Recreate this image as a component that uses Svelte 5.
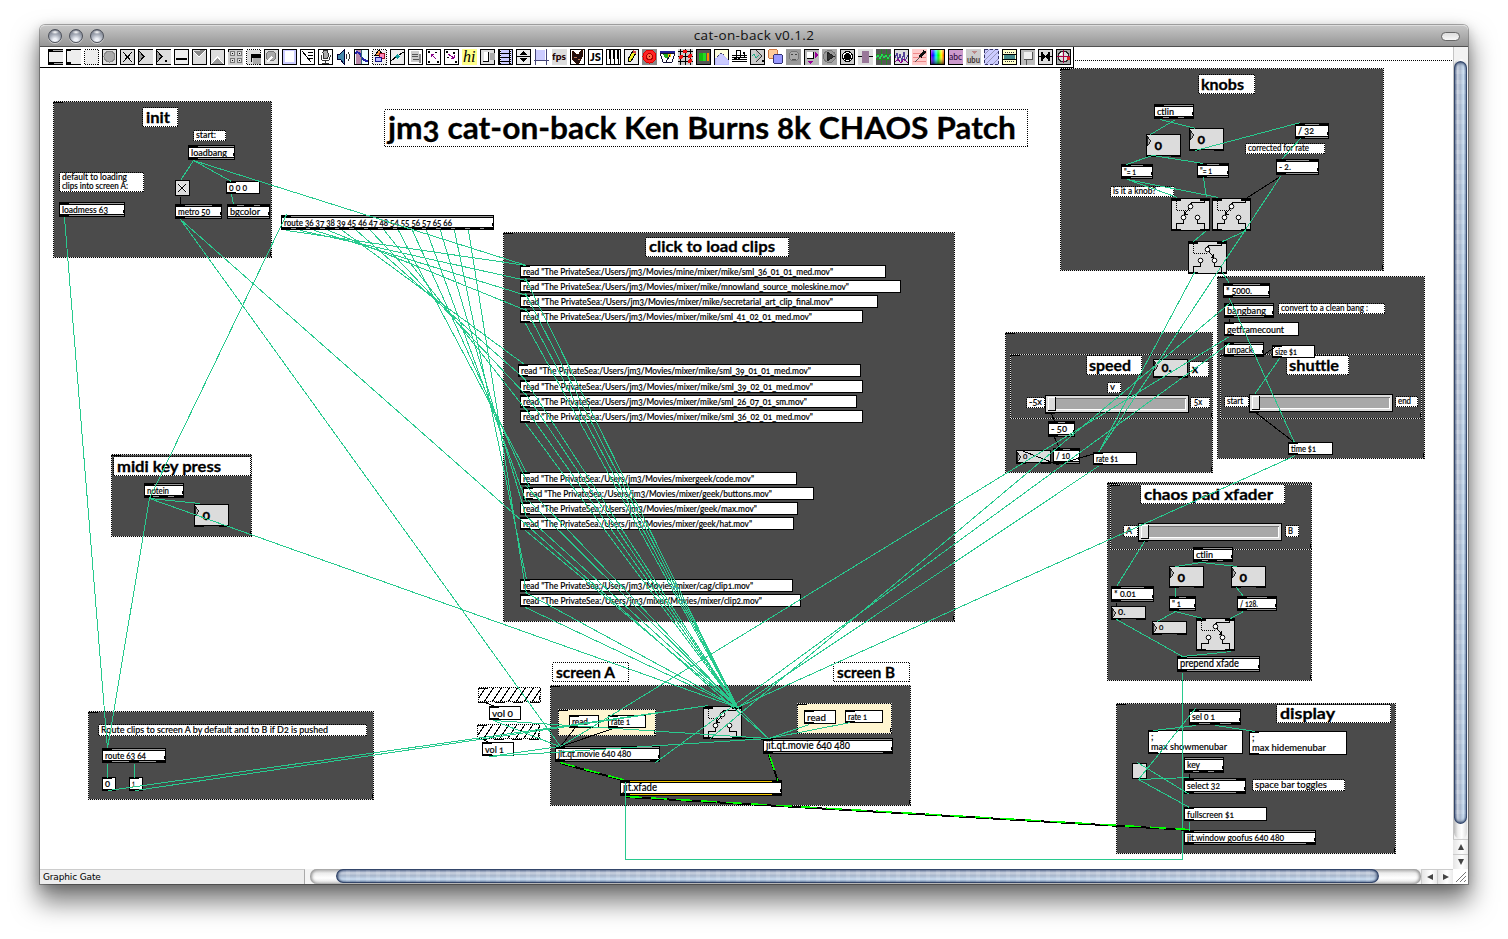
<script>
  const panels = [
    [53, 101, 219, 157], [503, 232, 452, 390], [1060, 68, 324, 203], [1005, 332, 208, 141],
    [1217, 276, 208, 183], [1107, 482, 205, 199], [1116, 703, 280, 151], [550, 685, 361, 121],
    [111, 454, 141, 83], [88, 711, 286, 89],
    [558, 709, 98, 27, '#fff5d0'], [797, 703, 95, 31, '#fff5d0'],
    [1010, 354, 203, 65, 'none'], [1220, 354, 202, 65, 'none'], [1110, 484, 202, 66, 'none'],
  ];

  // x, y, w, h, text, text width, font size, baseline offset, bold, text inset
  const comments = [
    [142, 107, 36, 20, 'init', 24, 16, 15.5, 1, 4],
    [384, 109, 644, 38, 'jm3 cat-on-back Ken Burns 8k CHAOS Patch', 628, 30, 30, 1, 4],
    [193, 130, 33, 11, 'start:', 20, 8.5, 8, 0, 3],
    [645, 237, 144, 20, 'click to load clips', 126, 16, 15, 1, 4],
    [1198, 74, 57, 20, 'knobs', 43, 16, 15.5, 1, 3],
    [1245, 143, 80, 11, 'corrected for rate', 61, 8.5, 8, 0, 3],
    [1110, 186, 64, 11, 'is it a knob?', 43, 8.5, 8, 0, 3],
    [1278, 303, 107, 11, 'convert to a clean bang :', 87, 8.5, 8, 0, 3],
    [1286, 355, 63, 20, 'shuttle', 50, 16, 15.5, 1, 3],
    [1086, 355, 56, 20, 'speed', 42, 16, 15.5, 1, 3],
    [1107, 382, 14, 11, 'v', 5, 8.5, 8, 0, 3],
    [1189, 361, 20, 16, 'x', 6, 12, 12, 1, 3],
    [1026, 397, 19, 11, '-5x', 13, 8.5, 8, 0, 3],
    [1190, 397, 20, 11, '5x', 8, 8.5, 8, 0, 4],
    [1224, 396, 25, 11, 'start', 16, 8.5, 8, 0, 3],
    [1395, 396, 23, 11, 'end', 13, 8.5, 8, 0, 3],
    [1140, 484, 145, 20, 'chaos pad xfader', 129, 16, 15.5, 1, 4],
    [1123, 525, 15, 12, 'A', 6, 9, 9, 0, 3],
    [1285, 525, 14, 12, 'B', 5, 9, 9, 0, 3],
    [1276, 704, 115, 19, 'display', 55, 16, 14.5, 1, 4],
    [1252, 779, 93, 12, 'space bar toggles', 72, 10, 9, 0, 3],
    [552, 662, 77, 20, 'screen A', 59, 16, 15.5, 1, 4],
    [833, 662, 77, 20, 'screen B', 58, 16, 15.5, 1, 4],
    [113, 456, 138, 20, 'midi key press', 104, 16, 15.5, 1, 4],
    [98, 724, 269, 12, 'Route clips to screen A by default and to B if D2 is pushed', 227, 10, 9, 0, 3],
  ];

  // x, y, w, h, text, text width, inlets, outlets, font size
  const objects = [
    [188, 145, 47, 15, 'loadbang', 36, 1, 1], [59, 202, 66, 15, 'loadmess 63', 46, 1, 1],
    [175, 204, 47, 15, 'metro 50', 32, 2, 1], [227, 204, 43, 15, 'bgcolor', 30, 3, 0],
    [281, 215, 213, 15, 'route 36 37 38 39 45 46 47 48 54 55 56 57 65 66', 168, 1, 15],
    [1154, 104, 40, 15, 'ctlin', 17, 1, 3], [1295, 123, 34, 16, '/ 32', 16, 2, 1],
    [1276, 159, 43, 16, '- 2.', 12, 2, 1, 10], [1121, 164, 32, 15, '"= 1', 12, 2, 1],
    [1197, 163, 32, 15, '"= 1', 12, 2, 1], [1223, 283, 47, 15, '* 5000.', 26, 2, 1],
    [1224, 303, 50, 15, 'bangbang', 39, 1, 2, 10], [1224, 342, 40, 15, 'unpack', 26, 1, 2],
    [1048, 421, 27, 16, '- 50', 16, 2, 1, 10], [1053, 448, 27, 16, '/ 10', 14, 2, 1, 10],
    [1193, 547, 40, 15, 'ctlin', 17, 1, 3], [1111, 586, 43, 16, '* 0.01', 22, 2, 1, 10],
    [1169, 596, 27, 15, '" 1', 9, 2, 1], [1237, 596, 40, 15, '/ 128.', 18, 2, 1],
    [1177, 656, 83, 16, 'prepend xfade', 59, 1, 1, 10.5], [1189, 709, 52, 16, 'sel 0 1', 23, 1, 3, 10],
    [1184, 757, 40, 16, 'key', 13, 0, 3, 10], [1184, 778, 62, 16, 'select 32', 33, 2, 2, 10],
    [1184, 830, 132, 15, 'jit.window goofus 640 480', 97, 1, 2, 9.5],
    [555, 746, 105, 16, 'jit.qt.movie 640 480', 73, 1, 2, 9.5],
    [763, 738, 130, 16, 'jit.qt.movie 640 480', 84, 1, 2, 10.5],
    [620, 780, 162, 16, 'jit.xfade', 34, 2, 2, 10.5, '#f5c800'],
    [144, 483, 40, 15, 'notein', 22, 1, 3], [102, 748, 64, 15, 'route 63 64', 41, 1, 3],
  ];

  // x, y, w, h, text, text width, font size
  const drive = 'read "The PrivateSea:/Users/jm3/';
  const messages = [
    [520, 265, 366, 13, drive + 'Movies/mine/mixer/mike/sml_36_01_01_med.mov"', 310],
    [520, 280, 381, 13, drive + 'Movies/mixer/mike/mnowland_source_moleskine.mov"', 326],
    [520, 295, 358, 13, drive + 'Movies/mixer/mike/secretarial_art_clip_final.mov"', 310],
    [520, 310, 343, 13, drive + 'Movies/mixer/mike/sml_41_02_01_med.mov"', 289],
    [518, 364, 343, 13, drive + 'Movies/mixer/mike/sml_39_01_01_med.mov"', 290],
    [520, 380, 343, 13, drive + 'Movies/mixer/mike/sml_39_02_01_med.mov"', 290],
    [520, 395, 337, 13, drive + 'Movies/mixer/mike/sml_26_07_01_sm.mov"', 284],
    [520, 410, 343, 13, drive + 'Movies/mixer/mike/sml_36_02_01_med.mov"', 290],
    [520, 472, 277, 13, drive + 'Movies/mixergeek/code.mov"', 231],
    [523, 487, 291, 13, drive + 'Movies/mixer/geek/buttons.mov"', 246],
    [520, 502, 278, 13, drive + 'Movies/mixer/geek/max.mov"', 234],
    [520, 517, 274, 13, drive + 'Movies/mixer/geek/hat.mov"', 229],
    [520, 579, 273, 13, drive + 'Movies/mixer/cag/clip1.mov"', 230],
    [520, 594, 281, 13, drive + 'mixer/Movies/mixer/clip2.mov"', 239],
    [226, 181, 34, 13, '0 0 0', 18], [1224, 322, 75, 14, 'getframecount', 57, 10],
    [1272, 345, 43, 13, 'size $1', 22], [1288, 442, 45, 13, 'time $1', 25],
    [1093, 452, 44, 13, 'rate $1', 22], [1148, 730, 95, 24, ';|max showmenubar', 76, 10],
    [1249, 731, 98, 24, ';|max hidemenubar', 74, 10], [1184, 807, 83, 14, 'fullscreen $1', 47, 10],
    [569, 715, 30, 13, 'read', 16], [608, 715, 38, 13, 'rate 1', 19],
    [804, 710, 32, 14, 'read', 19, 10], [845, 710, 38, 13, 'rate 1', 19],
    [489, 706, 32, 14, 'vol 0', 21, 10], [482, 742, 32, 14, 'vol 1', 19, 10],
    [102, 777, 14, 14, '0', 5], [129, 777, 14, 14, '1', 3],
  ];

  // x, y, w, h, text, font size, bold
  const numbers = [
    [1146, 134, 35, 22, '0', 14, 1], [1189, 128, 35, 22, '0', 14, 1], [1153, 359, 35, 18, '0.', 13, 1],
    [1016, 450, 35, 13, '0', 8, 0], [1169, 566, 35, 21, '0', 14, 1], [1231, 566, 35, 21, '0', 14, 1],
    [1111, 606, 35, 13, '0.', 9.5, 0], [1152, 621, 35, 13, '0', 8, 0], [194, 504, 35, 22, '0', 14, 1],
  ];
  const gates = [[1171, 198, 0], [1212, 198, 0], [1188, 241, 1], [1196, 618, 1], [703, 706, 0]];
  const sliders = [[1045, 395], [1249, 394], [1138, 523]];
  const toggles = [[175, 180, 1], [1132, 763, 0]];
  const hatches = [[478, 687], [477, 724]];

  const clipTops = messages.slice(0, 14);
  const cords = [
    [193, 160, 180, 180], [193, 160, 231, 181], [193, 160, 526, 265], [231, 194, 233, 204],
    [180, 219, 560, 746], [180, 219, 768, 738], [64, 217, 107, 748], [149, 498, 286, 214],
    [149, 498, 107, 748], [149, 498, 200, 503], [149, 498, 737, 707], [107, 763, 107, 777],
    [134, 763, 134, 777], [108, 790, 708, 705], [135, 790, 708, 705], [493, 720, 559, 746],
    [493, 720, 768, 738], [489, 756, 559, 746], [489, 756, 768, 738], [809, 724, 768, 738],
    [850, 722, 768, 738], [737, 707, 768, 738], [1229, 336, 560, 746], [1230, 302, 710, 738], [1230, 342, 655, 762],
    [1099, 465, 737, 707], [1295, 455, 737, 707], [1194, 272, 1098, 452], [1222, 272, 1229, 283],
    [1280, 176, 1098, 452], [1229, 298, 1294, 442], [1279, 358, 1254, 394], [1144, 541, 1116, 586],
    [1116, 619, 1182, 656], [1201, 562, 1175, 566], [1201, 562, 1237, 566], [1175, 587, 1175, 596],
    [1236, 587, 1243, 596], [1175, 611, 1157, 621], [1175, 611, 1202, 618], [1243, 611, 1230, 618],
    [1231, 651, 1182, 656], [1182, 672, 1182, 859], [1182, 859, 625, 859], [625, 859, 625, 781],
    [1160, 119, 1195, 128], [1175, 119, 1150, 134], [1195, 150, 1300, 122], [1300, 138, 1281, 159],
    [1152, 155, 1126, 164], [1152, 155, 1203, 163], [1127, 179, 1177, 197], [1127, 179, 1218, 197],
    [1203, 177, 1206, 197], [1206, 230, 1193, 241], [1246, 230, 1222, 241], [1195, 708, 1138, 779],
    [1196, 725, 1153, 730], [1215, 725, 1255, 731], [1137, 762, 1189, 794], [1138, 779, 1189, 777],
    [1138, 779, 1189, 807], [1189, 821, 1189, 830],
    ...clipTops.map((m, i) => [286 + 14 * i, 230, m[0] + 6, m[1]]),
    ...clipTops.map((m) => [m[0] + 5, m[1] + 13, 737, 707]),
  ];
  const darkCords = [
    [180, 196, 180, 204], [574, 728, 560, 746], [613, 728, 560, 746], [1229, 318, 1229, 322],
    [1262, 355, 1277, 345], [1255, 412, 1294, 442], [1051, 413, 1054, 421], [1054, 437, 1059, 448],
    [1057, 464, 1098, 452], [1057, 464, 1021, 450], [1116, 602, 1116, 606], [1280, 176, 1247, 197],
    [1189, 773, 1189, 778], [736, 738, 768, 739], [484, 702, 495, 706], [483, 739, 488, 742],
  ];
  const matrixCords = [[560, 762, 626, 780], [769, 754, 778, 780], [626, 796, 1189, 829]];

  const ports = (x, w, n) => Array.from({ length: n }, (_, i) => (n < 2 ? x : Math.round(x + (i * (w - 10)) / (n - 1))));
  const portW = (w, n) => Math.max(2, Math.min(10, Math.floor(w / Math.max(n, 1)) - 4));

  // Toolbar glyphs, each on a 16 x 16 grid
  const P = (d, c = '#000', f = 'none', w = 1) => `<path d="${d}" stroke="${c}" fill="${f}" stroke-width="${w}"/>`;
  const R = (x, y, w, h, f = '#000') => `<rect x="${x}" y="${y}" width="${w}" height="${h}" fill="${f}"/>`;
  const C = (x, y, r, f = '#000', s = 'none') => `<circle cx="${x}" cy="${y}" r="${r}" fill="${f}" stroke="${s}"/>`;
  const B = (f = '#eee', s = '#000') => `<rect x=".5" y=".5" width="14" height="15" fill="${f}" stroke="${s}"/>`;
  const T = (t, x, y, s, f = '#000', e = '') => `<text x="${x}" y="${y}" font-size="${s}" fill="${f}" ${e}>${t}</text>`;
  const dash = (f = '#fff') => `<rect x=".5" y=".5" width="14" height="15" fill="${f}" stroke="#000" stroke-dasharray="1 1"/>`;
  const icons = [
    R(0, 0, 15, 16, '#eee') + R(0, 0, 1, 16) + R(0, 0, 15, 3) + R(5, 1, 10, 1, '#aaa') + R(0, 13, 15, 3) + R(6, 14, 9, 1, '#aaa'),
    R(0, 0, 15, 16, '#eee') + R(0, 0, 1, 16) + R(0, 0, 15, 1) + R(0, 0, 5, 2) + R(0, 15, 15, 1) + R(0, 13, 5, 3),
    dash('#eee'),
    B('#ddd') + C(7.5, 7.5, 5.5, '#aaa', '#888'),
    B('#ddd') + P('M4 4L13 13', '#fff') + P('M3 3L12 13M12 3L3 13'),
    R(0, 0, 15, 16, '#ddd') + P('M.5 0V16M0 .5H15M0 15.5H15') + P('M1 2L6 7.5L1 13', '#000', '#999'),
    R(0, 0, 15, 16, '#ddd') + P('M.5 0V16M0 .5H15M0 15.5H15') + P('M1 2L6 7.5L1 13', '#000', '#999') + R(9, 11, 2, 2),
    B('#eee') + R(2, 9, 11, 2),
    B('#ddd') + P('M1 2L7 8L14 1', '#fff', '#888'),
    B('#ddd') + P('M1 15L7.5 8L14 15', '#fff', '#999'),
    R(0, 0, 15, 16, '#ccc') + [2, 9].map((x) => [2, 9].map((y) => R(x, y, 5, 5, '#777') + R(x + 1, y + 1, 3, 3, '#ddd') + R(x + 2, y + 2, 1, 1)).join('')).join('') + P('M0 .5H15M.5 0V3'),
    dash('#ddd') + R(5, 5, 10, 4) + R(7, 9, 8, 6, '#aaa') + R(5, 5, 1, 8),
    B('#ddd') + C(7, 7, 5, '#aaa', '#777') + P('M8 8L3 13', '#fff', 'none', 2),
    B('#ccf', '#000') + R(3, 2, 9, 11, '#fff'),
    B('#fff') + P('M2 2L11 13M8 3H13M8 6H13M8 9H13'),
    B('#fff') + `<rect x="5" y="1" width="5" height="9" rx="2.5" fill="#aaa" stroke="#333"/>` + P('M3 6V8Q3 12 7.5 12Q12 12 12 8V6M7.5 12V15M4 14.500H11', '#333'),
    P('M1 5H4L8 1V15L4 10H1Z', '#003', '#48a') + P('M10 5Q12 8 10 10M12 3Q15 8 12 12', '#333'),
    B('#eff') + R(2, 1, 5, 14, '#b8a') + P('M1 4Q5 2 7 7T14 12', '#22a', 'none', 2) + P('M7 1V15', '#367'),
    dash('#eee') + P('M3 6L7 1L11 6Z', '#000', '#f94') + C(10, 7, 3, '#f8b', '#912') + `<rect x="3.5" y="8.5" width="6" height="4" fill="#bbf" stroke="#118"/>`,
    B('#eee') + P('M1 12L7 7L14 3') + C(7.5, 7.5, 2.2, '#199'),
    B('#fff') + R(3, 2, 8, 11, '#ccc') + P('M4 5.500H10M4 7.500H10M5 10.500H12', '#555') + R(11, 5, 2, 9, '#888'),
    B('#fff') + R(2, 2, 2, 2) + R(2, 12, 2, 2) + R(11, 12, 2, 2) + R(9, 3, 2, 1) + P('M5 5L10 10M5 5.500H8M5.500 5V8', '#808'),
    B('#fff') + R(2, 2, 2, 2) + R(9, 3, 2, 2) + R(3, 8, 2, 1) + R(11, 12, 2, 2) + P('M4 5L10 9M10 9.500H7M10.500 9V6', '#808'),
    R(0, 0, 15, 16, '#ff8') + T('hi', 1, 13, 16, '#000', 'font-family="Liberation Serif" font-style="italic"'),
    B('#ddd') + R(4, 3, 5, 9, '#fff') + P('M8.5 3V12.500H3', '#000') + R(10, 4, 5, 7, '#aaa'),
    B('#ccf') + R(1, 1, 2, 14) + R(11, 1, 2, 14) + P('M3 4.5H11M3 8.5H11M3 12.5H11') + P('M2 1V15M12 1V15', '#fff', 'none', '1" stroke-dasharray="1 1'),
    B('#eee') + P('M4 6L7.5 2L11 6ZM4 9L7.5 13L11 9Z', 'none', '#000') + P('M1 7.5H14'),
    R(0, 0, 15, 16, '#fff') + R(2, 1, 9, 10, '#ccf') + P('M1.500 0V16M0 11.5H15M12.500 0V16', '#447'),
    R(0, 0, 15, 16, '#ddd') + T('fps', 0, 11, 9.5, '#200', 'font-weight="900" textLength="14" lengthAdjust="spacingAndGlyphs"'),
    B('#fff') + P('M3 2L6 5H9L12 1L12 8L9 14H6L2 10Z', '#310', '#211') + P('M4 8.500H7M8 10.500H10', '#b75'),
    B('#fff') + T('JS', 2, 12, 11, '#000', 'font-weight="900" textLength="11" lengthAdjust="spacingAndGlyphs"'),
    B('#fff') + R(3, 1, 2, 9) + R(7, 1, 2, 9) + R(11, 1, 2, 9) + P('M4.500 9V15M8.500 9V15M12.500 9V15'),
    B('#eee') + P('M4 10L9 2L12 4L7 12L4 13Z', '#000', '#ee2') + P('M9 2L12 4', '#c44', 'none', 2),
    R(0, 0, 15, 16, '#888') + C(7.5, 7.5, 6.5, '#f22', '#d00') + C(7.5, 7.5, 3, '#f64', '#a00') + C(7.5, 7.5, 1, '#400'),
    P('M0 4H15L12 13H3Z', '#113', '#fff') + P('M3 5L5 9H8V5Z', 'none', '#2a2') + R(8, 5, 3, 3, '#fc0') + P('M6 13L10 6', '#113') + P('M0 3H15', '#229', 'none', 2),
    R(0, 0, 15, 16, '#ccc') + P('M2.5 0V16M7.5 0V16M12.5 0V16M0 2.5H15M0 7.5H15M0 12.5H15') + C(7, 2.5, 2, '#e11') + C(12, 7, 2, '#e11') + C(3, 8, 2, '#e11') + C(12, 12, 2, '#e11'),
    B('#555') + R(3, 4, 4, 8, '#1b1') + R(7, 4, 3, 8, '#2d2') + R(11, 4, 2, 8, '#f80'),
    B('#ffd') + P('M1 15V10L3 9L5 6L7 4L9 6L12 9L14 11V15Z', '#bbf', '#ccf') + P('M3 8L5 6L7 4L10 6', '#446', 'none', '1" stroke-dasharray="1 1'),
    P('M0 6.5H15M0 8.5H15M0 10.5H15M0 12.5H15') + P('M4.500 1V10M8.500 1V9M4 1.500H8M12.500 4V9') + C(3, 10, 1.5) + C(7, 9, 1.5) + C(12, 4, 1.5),
    B('#ccc') + P('M6 1L12 7L6 13', '#333', '#bbb') + P('M2 7L4 5L6 9L9 6', '#2a8') + R(12, 11, 2, 2),
    `<rect x=".5" y=".5" width="9" height="9" rx="2" fill="#fc9" stroke="#c74"/><rect x="5.500" y="5.500" width="9" height="9" rx="2" fill="#99f" stroke="#337"/>`,
    R(0, 0, 15, 16, '#999') + C(8, 7, 5, '#aaa', '#777') + R(5, 5, 2, 1, '#444') + R(9, 5, 2, 1, '#444') + R(6, 10, 4, 1, '#555'),
    R(0, 0, 15, 16, '#bbb') + P('M0 .5H15M.5 0V16') + R(3, 3, 6, 6, '#fff') + P('M9.500 3V9.5H3') + P('M11 3V9L14 6ZM4 12H9L6.500 15Z', 'none', '#909'),
    R(0, 0, 15, 16, '#aaa') + C(7.5, 7.5, 6, '#999', '#777') + P('M5 3L12 7.5L5 12Z', '#222', '#333'),
    B('#ccc') + C(7.5, 7.5, 5, '#fff', '#000') + C(7.5, 7.5, 3.5),
    R(0, 0, 15, 16, '#ddd') + P('M0 7.5H15') + R(4, 2, 7, 12, '#979'),
    R(0, 0, 15, 16, '#555') + P('M5.500 0V16M10.500 0V16M0 5.500H15M0 10.500H15', '#282') + P('M0 9L2 6L4 10L6 5L8 9L10 6L12 10L15 5', '#2d5'),
    B('#ddd') + P('M1 9L3 4L4 12L6 5L8 12L10 3L11 12L14 6', '#549') + P('M1 13L4 10L7 14L10 10L14 14', '#808'),
    R(0, 0, 15, 16, '#fcc') + P('M1 4.500H14M1 8.500H14M1 12.500H14', '#e88') + P('M3 13L8 8', '#555') + P('M8 8L13 2', '#111', 'none', 3),
    `<rect width="15" height="16" fill="url(#hue)"/><rect width="15" height="16" fill="url(#shade)"/>` + P('M.5 0V16M14.500 0V16M0 .5H15M0 15.5H15'),
    R(0, 0, 15, 16, '#c9c') + P('M0 .5H15M.5 0V16M0 15.5H15') + T('abc', 1, 11, 10, '#203', 'textLength="13" lengthAdjust="spacingAndGlyphs"'),
    R(0, 0, 15, 16, '#ccc') + P('M5 2H11L8 5Z', 'none', '#b88') + T('ubu', 1, 14, 9, '#433', 'font-weight="700" textLength="13" lengthAdjust="spacingAndGlyphs"'),
    R(0, 0, 15, 16, '#ccf') + P('M0 6L6 0M0 12L12 0M2 15L15 2M9 15L15 9', '#99b') + `<rect x=".5" y=".5" width="14" height="15" fill="none" stroke="#336" stroke-dasharray="3 2"/>`,
    B('#ffc') + R(2, 5, 11, 5, '#488') + P('M3 3.500H12M3 12.500H12', '#333', 'none', '1" stroke-dasharray="1 1') + P('M1 5.500H14M1 10.500H14'),
    R(0, 0, 15, 16, '#bbb') + P('M0 .5H15M.5 0V16') + R(4, 3, 8, 7, '#eee') + P('M4 10.500H12.500V3M6.500 10V16', '#555'),
    B('#ddd') + P('M1 7.500H14') + P('M4 3V12M11 3V12', '#000', 'none', 2) + P('M5 5V10L8 7.500ZM10 5V10L7 7.500Z', 'none', '#000'),
    B('#aaa') + C(7.5, 7.5, 5.5, '#ddd', '#222') + P('M7.500 1V14M1 7.500H14', '#a04') + R(4, 4, 2, 2, '#fff') + R(11, 8, 3, 3, '#d22'),
  ];
</script>

<div class="desktop">
<main class="window">
  <header class="titlebar">
    <div class="lights"><i></i><i></i><i></i></div>
    <h1>cat-on-back v0.1.2</h1>
    <b class="pill"></b>
  </header>

  <section class="body">
    <div class="workspace">
      <svg class="patch" width="1413" height="822" viewBox="40 47 1413 822">
        <defs>
          <pattern id="hatch" width="8" height="12" patternUnits="userSpaceOnUse"><path d="M-4 18L12 -6M-4 6L4 -6M4 18L12 6" stroke="#000" /></pattern>
          <linearGradient id="hue"><stop offset="0" stop-color="#f0f" /><stop offset=".2" stop-color="#00f" /><stop offset=".4" stop-color="#0ff" /><stop offset=".55" stop-color="#0f0" /><stop offset=".75" stop-color="#ff0" /><stop offset="1" stop-color="#f00" /></linearGradient>
          <linearGradient id="shade" x2="0" y2="1"><stop offset="0" stop-color="#fff" stop-opacity=".5" /><stop offset=".4" stop-color="#fff" stop-opacity="0" /><stop offset="1" stop-color="#000" stop-opacity=".8" /></linearGradient>
        </defs>
        <path class="dots" d="M1075 60.500H1453" />

        {#each panels as [x, y, w, h, fill]}
          <rect x={x + 0.5} y={y + 0.5} width={w - 1} height={h - 1} fill={fill ?? '#4b4b4b'} />
          <rect class="under" x={x + 0.5} y={y + 0.5} width={w - 1} height={h - 1} />
          <rect class="dots" x={x + 0.5} y={y + 0.5} width={w - 1} height={h - 1} />
          <path d="M{x} {y + 1.5}h10M{x + w - 1.5} {y + h - 6}v4" stroke="#000" />
        {/each}

        {#each comments as [x, y, w, h, text, tw, fs, dy, bold, dx]}
          <rect x={x + 0.5} y={y + 0.5} width={w - 1} height={h - 1} fill="#fff" />
          <rect class="dots" x={x + 0.5} y={y + 0.5} width={w - 1} height={h - 1} />
          <text class:bold x={x + dx} y={y + dy} font-size={fs} textLength={tw} lengthAdjust="spacingAndGlyphs">{text}</text>
        {/each}
        <rect x="59.500" y="172.500" width="84" height="19" fill="#fff" />
        <rect class="dots" x="59.500" y="172.500" width="84" height="19" />
        <text x="62" y="180" font-size="8.500" textLength="65" lengthAdjust="spacingAndGlyphs">default to loading</text>
        <text x="62" y="189" font-size="8.500" textLength="66" lengthAdjust="spacingAndGlyphs">clips into screen A:</text>

        {#each hatches as [x, y]}
          <rect x={x + 0.5} y={y + 0.5} width="62" height="14" fill="#fff" />
          <rect class="dots" x={x + 0.5} y={y + 0.5} width="62" height="14" style:fill="url(#hatch)" />
          <path d="M{x} {y + 1.5}h10M{x + 61} {y + 9}v4M{x} {y + 15.5}h10M{x + 17} {y + 15.5}h10M{x + 35} {y + 15.5}h10M{x + 52} {y + 15.5}h10" stroke="#000" />
        {/each}

        {#each objects as [x, y, w, h, text, tw, ins, outs, fs, bar]}
          <rect {x} {y} width={w} height={h} />
          <rect x={x + 1} y={y + 1} width={w - 2} height="1" fill={bar ?? '#999'} />
          <rect x={x + 1} y={y + h - 2} width={w - 2} height="1" fill={bar ?? '#999'} />
          <rect x={x + 1} y={y + 3} width={w - 2} height={h - 6} fill="#fff" />
          {#each ports(x, w, ins) as px}<rect x={px} {y} width="10" height="3" />{/each}
          {#each ports(x, w, outs) as px}<rect x={px} y={y + h - 3} width={portW(w, outs)} height="3" />{/each}
          <rect x={x + w - 2} y={y + h - 7} width="1" height="3" />
          <text x={x + 3} y={y + (fs ? 11 : 10.5)} font-size={fs ?? 8.5} textLength={tw} lengthAdjust="spacingAndGlyphs">{text}</text>
        {/each}

        {#each messages as [x, y, w, h, text, tw, fs]}
          <rect x={x + 0.5} y={y + 0.5} width={w - 1} height={h - 1} fill="#fff" stroke="#000" />
          <rect {x} {y} width={Math.min(10, w)} height="2" />
          <rect {x} y={y + h - 2} width={Math.min(10, w)} height="2" />
          {#each text.split('|') as line, i}
            <text x={x + 3} y={y + (text[0] === ';' ? 10 + i * 9.5 : fs ? 10.5 : 9.5)} font-size={fs ?? 8.5} textLength={line === ';' ? 2.5 : tw} lengthAdjust="spacingAndGlyphs">{line}</text>
          {/each}
        {/each}

        {#each numbers as [x, y, w, h, text, fs, bold]}
          <rect x={x + 0.5} y={y + 0.5} width={w - 1} height={h - 1} fill="#dcdcdc" stroke="#000" />
          <path d="M{x + 1} {y + 2}l4 5l-4 5z" fill="#aaa" stroke="#000" stroke-width=".8" />
          <path d="M{x} {y + h - 0.5}h10m{w - 20} 0h10" stroke="#000" stroke-width="2" />
          <text class:bold x={x + (bold ? 8.5 : 7)} y={y + (h > 20 ? 15.5 : h > 15 ? 13 : 9)} font-size={fs}>{text}</text>
        {/each}

        {#each gates as [x, y, right]}
          <g transform="translate({x} {y})" fill="none" stroke="#000">
            <rect x=".5" y=".5" width="38" height="32" fill="#dcdcdc" />
            <path d="M5.500 1v11.500h14" stroke-dasharray="1 1" />
            <path d="M33.500 1v3.500h-13l-1 2" />
            <path d="M12.500 21v4.500h-7v7M26.500 21v4.500h7v7" />
            {#if right}<path d="M20.500 10l5 6m0-3v3.500h-3" />{:else}<path d="M18.500 10l-5 6m0-3v3.500h3" />{/if}
            <g fill="#fff" class="smooth"><circle cx="19.500" cy="8.500" r="2.300" /><circle cx="12.500" cy="19.500" r="2.300" /><circle cx="26.500" cy="19.500" r="2.300" /></g>
            <path d="M0 1.500h10M29 1.500h10M0 31.500h10M29 31.500h10" stroke-width="2" />
          </g>
        {/each}

        {#each sliders as [x, y]}
          <g transform="translate({x} {y})">
            <rect x=".5" y=".5" width="143" height="17" fill="#dcdcdc" stroke="#000" />
            <rect x="3" y="3" width="138" height="12" fill="#777" />
            <rect x="4" y="4" width="137" height="11" fill="#fff" />
            <rect x="4" y="4" width="136" height="10" fill="#a8a8a8" />
            <rect x="3" y="2" width="8" height="14" fill="#000" />
            <rect x="3" y="2" width="7" height="13" fill="#fff" />
            <rect x="4" y="3" width="6" height="12" fill="#dcdcdc" />
            <path d="M0 17.500h10" stroke="#000" stroke-width="2" />
          </g>
        {/each}

        {#each toggles as [x, y, on]}
          <g transform="translate({x} {y})">
            <rect x=".5" y=".5" width="14" height="15" fill="#dcdcdc" stroke="#000" />
            {#if on}<path d="M4 4L12 12" stroke="#fff" /><path d="M3 4L11 12M11 4L3 12" stroke="#000" />{/if}
            <path d="M0 15.500h5" stroke="#000" stroke-width="1" />
          </g>
        {/each}

        <g class="cords">
          {#each darkCords as [a, b, c, d]}<path d="M{a + 0.5} {b + 0.5}L{c + 0.5} {d + 0.5}" stroke="#000" />{/each}
          {#each cords as [a, b, c, d]}<path d="M{a + 0.5} {b + 0.5}L{c + 0.5} {d + 0.5}" stroke="#28ca8e" />{/each}
          {#each matrixCords as [a, b, c, d]}
            <path d="M{a} {b + 1}L{c} {d + 1}" stroke="#000" stroke-width="2" />
            <path d="M{a} {b + 0.5}L{c} {d + 0.5}" stroke="#0f0" stroke-width="1.500" stroke-dasharray="16 9" />
          {/each}
        </g>
      </svg>

      <nav class="toolbar">
        {#each icons as icon}<svg width="16" height="16" viewBox="0 0 16 16">{@html icon}</svg>{/each}
      </nav>
    </div>
    <aside class="vscroll">
      <div class="vtrack"><div class="vthumb"></div></div>
      <span class="arrow up"></span><span class="arrow down"></span>
    </aside>
  </section>

  <footer class="bottom">
    <div class="status">Graphic Gate</div>
    <div class="htrack"><div class="hthumb"></div></div>
    <span class="arrow left"></span><span class="arrow right"></span>
    <svg class="grip" width="15" height="15" viewBox="0 0 15 15"><path d="M3 13L13 3M7 13L13 7M11 13L13 11" stroke="#777" /></svg>
  </footer>
</main>
</div>

<style>
  :global(body) { background: #fff; }
  .desktop { height: 939px; box-sizing: border-box; padding: 25px 0 0 40px; overflow: hidden; background: #fff; }
  .window {
    width: 1428px; height: 859px; box-sizing: border-box;
    display: flex; flex-direction: column; border-radius: 5px 5px 0 0; background: #fff;
    box-shadow: 0 0 0 1px rgba(0, 0, 0, .3), 0 16px 26px 2px rgba(0, 0, 0, .52), 0 3px 12px rgba(0, 0, 0, .22);
  }
  .titlebar {
    height: 22px; box-sizing: border-box; flex: none; display: grid; grid-template-columns: 100px 1fr 100px; align-items: center;
    border-bottom: 1px solid #515151; border-top: 1px solid #ddd; border-radius: 5px 5px 0 0;
    background: linear-gradient(#c5c5c5, #969696);
  }
  .lights { display: flex; gap: 7px; padding-left: 8px; }
  .lights i {
    width: 14px; height: 14px; box-sizing: border-box; border-radius: 50%; border: 1px solid #4c505a;
    background: radial-gradient(ellipse 4px 2px at 50% 18%, #fff, transparent), radial-gradient(circle at 50% 85%, #eef1f7 0 15%, #a5abb7 50%, #626875);
    box-shadow: 0 1px 0 rgba(255, 255, 255, .5);
  }
  h1 { margin: 0; padding-bottom: 2px; text-align: center; font: 400 13.500px/18px "Open Sans", sans-serif; letter-spacing: .38px; color: #111; }
  .pill { justify-self: end; width: 19px; height: 9px; margin-right: 8px; box-sizing: border-box; border: 1px solid #666; border-radius: 5px; background: linear-gradient(#ddd, #f7f7f7); }
  .body { display: flex; height: 822px; flex: none; }
  .workspace { position: relative; width: 1413px; }
  .patch { display: block; font-family: Lato, sans-serif; shape-rendering: crispEdges; }
  .patch text { font-variant-numeric: oldstyle-nums; font-weight: 500; fill: #000; stroke: #000; stroke-width: .15px; }
  .patch text.bold { font-weight: 700; stroke-width: .3px; }
  .dots { fill: none; stroke: #000; stroke-dasharray: 1 1; }
  .under { fill: none; stroke: #ddd; }
  .smooth { shape-rendering: auto; }
  .toolbar {
    position: absolute; left: 0; top: 0; width: 1034px; height: 21px; box-sizing: border-box; padding: 2px 0 0 8px;
    display: flex; gap: 2px; background: #fff; border-bottom: 1px solid #000; border-right: 1px solid #000;
    font-family: Lato, sans-serif;
  }
  .toolbar svg { flex: none; shape-rendering: crispEdges; }
  .vscroll { width: 15px; display: flex; flex-direction: column; background: #f2f2f2; box-shadow: inset 1px 0 #c4c4c4; }
  .vtrack { flex: 1; margin: 12px 1px 0; border-radius: 7px; background: linear-gradient(90deg, #bbb, #eee 30%, #fff 60%, #ddd); box-sizing: border-box; padding-top: 2px; }
  .vthumb {
    height: 763px; border-radius: 7px; box-shadow: inset 0 0 0 1px #34466a, inset 0 -2px 3px #2d4267, inset 0 2px 3px #2d4267;
    background: repeating-linear-gradient(0deg, rgba(255, 255, 255, .13) 0 4px, transparent 4px 10px), linear-gradient(90deg, #8594b0 10%, #c9d1df 28%, #a7b6cc 48%, #c9dcf0 72%, #7e93b4);
  }
  .arrow { position: relative; flex: none; width: 15px; height: 15px; background: linear-gradient(90deg, #e5e5e5, #fff 60%, #eaeaea); border-top: 1px solid #ccc; box-sizing: border-box; display: grid; place-items: center; }
  .arrow::before { content: ""; border: 3px solid transparent; }
  .up::before { border-bottom: 6px solid #444; border-top: 0; }
  .down::before { border-top: 6px solid #444; border-bottom: 0; }
  .left::before { border-right: 6px solid #444; border-left: 0; }
  .right::before { border-left: 6px solid #444; border-right: 0; }
  .left, .right { width: 16px; border-left: 1px solid #ccc; }
  .bottom { height: 15px; flex: none; display: flex; background: #f4f4f4; }
  .status { width: 265px; box-sizing: border-box; padding-left: 3px; border-top: 1px solid #ccc; border-right: 1px solid #aaa; background: #ededed; font: 9px/14px "DejaVu Sans", sans-serif; letter-spacing: -.15px; color: #000; }
  .htrack { flex: 1; margin: 0 0 0 5px; padding-left: 26px; border-radius: 7px; background: linear-gradient(#bbb, #eee 30%, #fff 60%, #ddd); box-shadow: inset 2px 0 3px #999, inset -2px 0 3px #999; }
  .hthumb {
    width: 1043px; height: 14px; border-radius: 7px; box-shadow: inset 0 0 0 1px #34466a, inset 2px 0 3px #2d4267, inset -2px 0 3px #2d4267;
    background: repeating-linear-gradient(90deg, rgba(255, 255, 255, .13) 0 4px, transparent 4px 10px), linear-gradient(#8594b0 10%, #c9d1df 28%, #a7b6cc 48%, #c9dcf0 72%, #7e93b4);
  }
  .grip { flex: none; background: #fff; }
</style>
